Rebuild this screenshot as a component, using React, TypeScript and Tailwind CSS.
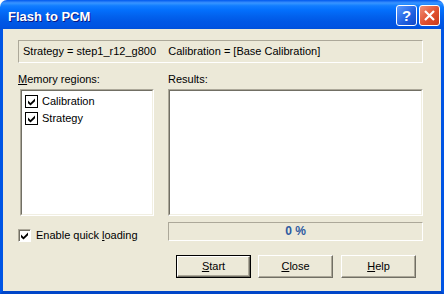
import { FC, ReactNode } from "react";

const font = { fontFamily: '"Liberation Sans", Arial, sans-serif' };

// sunken 3D edge used by the list box and results box
const Sunken: FC<{ className?: string; children?: ReactNode }> = ({ className = "", children }) => (
  <div className={`border border-t-[#ACA899] border-l-[#ACA899] border-b-white border-r-white ${className}`}>
    <div className="h-full w-full border border-t-[#716F64] border-l-[#716F64] border-b-[#F1EFE2] border-r-[#F1EFE2] bg-white">
      {children}
    </div>
  </div>
);

const Check: FC<{ sunken?: boolean }> = ({ sunken }) => (
  <span
    className={`flex h-[13px] w-[13px] shrink-0 items-center justify-center bg-white ${
      sunken
        ? "border border-t-[#ACA899] border-l-[#ACA899] border-b-white border-r-white shadow-[inset_1px_1px_0_#716F64]"
        : "border border-black"
    }`}
  >
    <svg width="9" height="9" viewBox="0 0 9 9">
      <path d="M1 3.5 L3.5 6 L8 1.5 L8 4.2 L3.5 8.6 L1 6.2 Z" fill="#000" />
    </svg>
  </span>
);

const Btn: FC<{ def?: boolean; children: ReactNode }> = ({ def, children }) => (
  <div className={`h-[23px] w-[75px] ${def ? "border border-black" : ""}`}>
    <div className="flex h-full w-full items-center justify-center border border-t-white border-l-white border-b-[#716F64] border-r-[#716F64] bg-[#ECE9D8] shadow-[inset_-1px_-1px_0_#ACA899] text-[11px] text-black">
      {children}
    </div>
  </div>
);

export default function App() {
  return (
    <div className="flex h-[294px] w-[444px] flex-col bg-white" style={font}>
      {/* title bar */}
      <div className="flex h-[29px] items-start rounded-t-[7px] bg-[linear-gradient(to_bottom,#0058EE_0%,#3A93FF_10%,#288EFF_14%,#127DFF_20%,#036FFC_35%,#0262EE_55%,#0057E5_75%,#0054E3_90%,#0050DA_100%)] pl-[8px] pr-[4px]">
        <span className="mt-[7px] text-[13px] font-bold text-white [text-shadow:1px_1px_#0A1883]">
          Flash to PCM
        </span>
        <div className="ml-auto mt-[5px] flex gap-[2px]">
          <div className="flex h-[21px] w-[21px] items-center justify-center rounded-[3px] border border-white bg-[linear-gradient(135deg,#5C9BFF,#1F5FE0_60%,#1148C8)] text-[15px] font-bold leading-none text-white">
            ?
          </div>
          <div className="flex h-[21px] w-[21px] items-center justify-center rounded-[3px] border border-white bg-[linear-gradient(135deg,#F09078,#E0502F_55%,#C73A1A)]">
            <svg width="11" height="11" viewBox="0 0 11 11">
              <path d="M1 1 L10 10 M10 1 L1 10" stroke="#fff" strokeWidth="2.2" />
            </svg>
          </div>
        </div>
      </div>

      {/* client */}
      <div className="flex flex-1 flex-col border-x-[3px] border-b-[3px] border-x-[#0055E5] border-b-[#0046C8] bg-[#ECE9D8] pl-[15px] text-[11px] leading-[13px] text-black">
        <div className="mt-[11px] flex h-[23px] w-[405px] items-center border border-t-[#ACA899] border-l-[#ACA899] border-b-white border-r-white pl-[4px]">
          <span className="whitespace-pre">Strategy = step1_r12_g800    Calibration = [Base Calibration]</span>
        </div>

        <div className="mt-[10px] flex">
          <div className="flex w-[136px] flex-col">
            <div className="h-[16px]">
              <span className="underline underline-offset-1">M</span>emory regions:
            </div>
            <Sunken className="ml-[2px] h-[127px] w-[134px]">
              <div className="flex flex-col gap-[4px] pl-[3px] pt-[4px]">
                <div className="flex items-center gap-[4px]">
                  <Check />
                  <span>Calibration</span>
                </div>
                <div className="flex items-center gap-[4px]">
                  <Check />
                  <span>Strategy</span>
                </div>
              </div>
            </Sunken>
            <div className="mt-[13px] flex items-center gap-[5px]">
              <Check sunken />
              <span>
                Enable quick <span className="underline underline-offset-1">l</span>oading
              </span>
            </div>
          </div>

          <div className="ml-[14px] flex w-[255px] flex-col">
            <div className="h-[16px]">Results:</div>
            <Sunken className="h-[127px] w-[255px]" />
            <div className="mt-[6px] flex h-[19px] w-[255px] items-center justify-center border border-t-[#ACA899] border-l-[#ACA899] border-b-white border-r-white font-bold text-[12px] text-[#2C5AA0]">
              0 %
            </div>
            <div className="ml-[8px] mt-[14px] flex">
              <Btn def>
                <span className="underline underline-offset-1">S</span>tart
              </Btn>
              <div className="ml-[7px]">
                <Btn>
                  <span className="underline underline-offset-1">C</span>lose
                </Btn>
              </div>
              <div className="ml-[8px]">
                <Btn>
                  <span className="underline underline-offset-1">H</span>elp
                </Btn>
              </div>
            </div>
          </div>
        </div>
      </div>
    </div>
  );
}
